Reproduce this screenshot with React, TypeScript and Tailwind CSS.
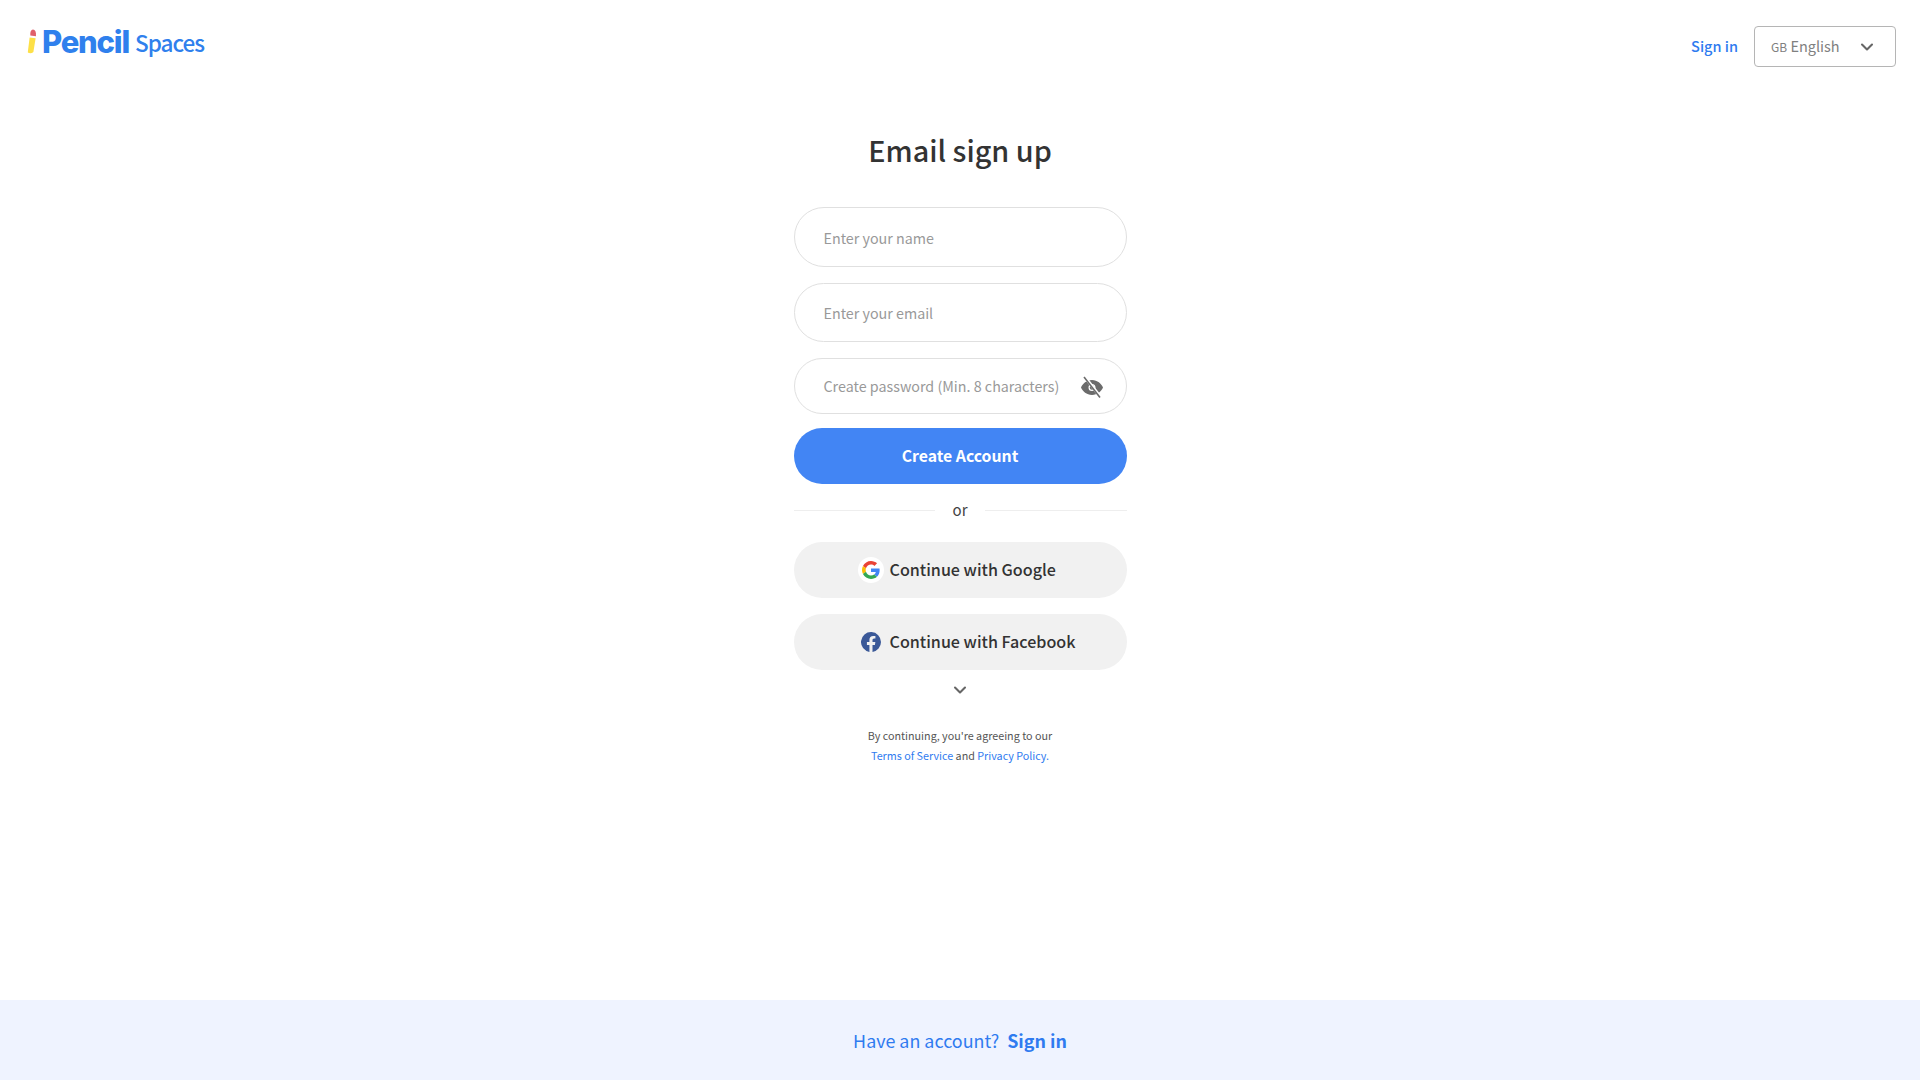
import { ChevronDown } from "lucide-react";

const font = "font-['Noto_Sans_CJK_JP','Noto_Sans',sans-serif]";

function Logo() {
  return (
    <div className="flex items-center">
      <svg width="12" height="26" viewBox="0 0 12 26" className="mr-[4px] mt-[-3px] ml-[-1px]">
        <path d="M3.6 9.5 L9.6 10.2 L7.4 24 Q5 26 1.8 24.6 Z" fill="#fde047" />
        <path d="M4.3 7.6 Q3.9 2 7 1.6 Q10.4 1.6 10 8.2 Z" fill="#e0606a" />
      </svg>
      <span className="mt-[-2px] font-['Inter',sans-serif] text-[31px] font-extrabold leading-none tracking-[-1.2px] text-[#2f80ed]">
        Pencil
      </span>
      <span className="ml-[6px] mt-0 text-[22.500px] font-medium leading-none tracking-[-1px] text-[#2f80ed]">Spaces</span>
    </div>
  );
}

function EyeOff() {
  return (
    <svg width="24" height="24" viewBox="0 0 24 24" className="mt-[1px] text-[#6b6b6b]">
      <path
        fill="currentColor"
        d="M12 5C6.500 5 2.700 8.800 1 12.500 2.700 16.200 6.500 20 12 20s9.300-3.800 11-7.500C21.300 8.800 17.500 5 12 5Zm0 11a3.500 3.500 0 1 1 0-7 3.500 3.500 0 0 1 0 7Z"
      />
      <circle cx="12" cy="12.500" r="2.200" fill="currentColor" />
      <path d="M4.500 1.500 20.500 22" stroke="white" strokeWidth="3" />
      <path d="M4 2 20 22.500" stroke="currentColor" strokeWidth="1.600" />
    </svg>
  );
}

function GoogleIcon() {
  return (
    <svg width="18" height="18" viewBox="0 0 48 48">
      <path fill="#EA4335" d="M24 9.500c3.500 0 6.700 1.200 9.200 3.600l6.900-6.900C35.900 2.400 30.500 0 24 0 14.600 0 6.500 5.400 2.600 13.200l8 6.200C12.500 13.700 17.800 9.500 24 9.500z" />
      <path fill="#4285F4" d="M47 24.500c0-1.600-.1-3.100-.4-4.500H24v9h12.900c-.6 3-2.200 5.500-4.700 7.200l7.700 6C44.400 37.900 47 31.800 47 24.500z" />
      <path fill="#FBBC05" d="M10.600 28.600c-.5-1.400-.8-3-.8-4.600s.3-3.200.8-4.600l-8-6.200C.9 16.500 0 20.100 0 24s.9 7.500 2.600 10.800l8-6.200z" />
      <path fill="#34A853" d="M24 48c6.500 0 11.900-2.100 15.900-5.800l-7.700-6c-2.200 1.500-4.900 2.300-8.200 2.300-6.200 0-11.500-4.200-13.400-9.900l-8 6.200C6.500 42.600 14.600 48 24 48z" />
    </svg>
  );
}

function FacebookIcon() {
  return (
    <svg width="20" height="20" viewBox="0 0 24 24">
      <path
        fill="#3b5998"
        d="M24 12a12 12 0 1 0-13.900 11.900v-8.400h-3V12h3V9.400c0-3 1.800-4.700 4.500-4.700 1.300 0 2.700.2 2.700.2v3h-1.500c-1.500 0-2 .9-2 1.900V12h3.400l-.5 3.500h-2.900v8.400A12 12 0 0 0 24 12Z"
      />
    </svg>
  );
}

export default function App() {
  return (
    <div className={`${font} relative flex h-[1080px] w-full flex-col overflow-hidden bg-white text-[#333]`}>
      <header className="flex h-[92px] shrink-0 items-start justify-between pl-[27px] pr-[24px]">
        <div className="mt-[28px]">
          <Logo />
        </div>
        <div className="mt-[26px] flex items-center gap-4">
          <a href="#" className="mt-[-1px] text-[14.500px] font-medium text-[#2f7bf0]">Sign in</a>
          <div className="flex h-[41px] w-[142px] items-center justify-between rounded-[4px] border border-[#b5b5b5] pl-[16px] pr-[18px] text-[14.500px] text-[#808080]">
            <span className="mt-[-1px]"><span className="text-[12px]">GB</span> English</span>
            <ChevronDown size={20} strokeWidth={2.500} className="text-[#666]" />
          </div>
        </div>
      </header>

      <main className="flex flex-1 flex-col items-center">
        <h1 className="mt-[37px] text-[28.800px] font-medium leading-[42px] text-[#333]">Email sign up</h1>

        <div className="mt-[36px] flex w-[333px] flex-col">
          <div className="flex h-[60px] items-center rounded-full border border-[#e0e0e0] pl-[29px] text-[14.300px] text-[#999]">
            <span className="mt-[1px]">Enter your name</span>
          </div>
          <div className="mt-[16px] flex h-[59px] items-center rounded-full border border-[#e0e0e0] pl-[29px] text-[14.300px] text-[#999]">
            Enter your email
          </div>
          <div className="mt-[16px] flex h-[56px] items-center justify-between rounded-full border border-[#e0e0e0] pl-[29px] pr-[22px] text-[14.300px] text-[#999]">
            Create password (Min. 8 characters)
            <EyeOff />
          </div>
          <button className="mt-[14px] h-[56px] rounded-full bg-[#4285f4] text-[15.800px] font-bold text-white">
            Create Account
          </button>

          <div className="mt-[16px] flex items-center gap-[18px] text-[15px] leading-[20px] text-[#444]">
            <div className="h-px flex-1 bg-[#eeeeee]" />
            or
            <div className="h-px flex-1 bg-[#eeeeee]" />
          </div>

          <button className="mt-[22px] flex h-[56px] items-center justify-start rounded-full bg-[#f1f1f1] pl-[64px] text-[16.100px] font-medium text-[#333]">
            <span className="mr-[6px] flex h-[26px] w-[26px] items-center justify-center rounded-full bg-white">
              <GoogleIcon />
            </span>
            <span className="mt-[-1px]">Continue with Google</span>
          </button>
          <button className="mt-[16px] flex h-[56px] items-center justify-start rounded-full bg-[#f1f1f1] pl-[67px] text-[16.100px] font-medium text-[#333]">
            <span className="mr-[9px] flex h-[20px] w-[20px] items-center justify-center">
              <FacebookIcon />
            </span>
            <span className="mt-[-1px]">Continue with Facebook</span>
          </button>

          <div className="mt-[10px] flex justify-center">
            <ChevronDown size={20} strokeWidth={2.500} className="text-[#666]" />
          </div>

          <p className="mt-[26px] text-center text-[10.750px] leading-[20px] text-[#555]">
            By continuing, you're agreeing to our
            <br />
            <a href="#" className="text-[#2f7bf0]">Terms of Service</a> and{" "}
            <a href="#" className="text-[#2f7bf0]">Privacy Policy.</a>
          </p>
        </div>
      </main>

      <footer className="flex h-[80px] shrink-0 items-center justify-center gap-2 bg-[#eff3ff] text-[17.900px] text-[#2f7bf0]">
        <span>Have an account?</span>
        <a href="#" className="font-bold">Sign in</a>
      </footer>
    </div>
  );
}
